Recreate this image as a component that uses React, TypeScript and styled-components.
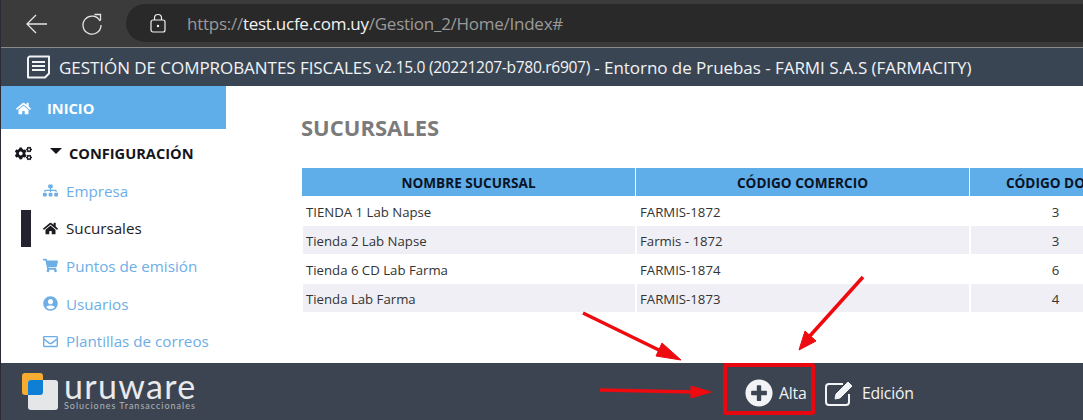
import styled, { createGlobalStyle } from "styled-components";
import {
  FaCogs,
  FaHome,
  FaPlusCircle,
  FaRegEnvelope,
  FaShoppingCart,
  FaSitemap,
  FaUserCircle,
} from "react-icons/fa";

const GlobalStyle = createGlobalStyle`
  html, body {
    margin: 0;
    padding: 0;
    background: #fff;
    overflow: hidden;
  }
  * {
    box-sizing: border-box;
  }
`;

const Page = styled.div`
  position: relative;
  width: 1083px;
  height: 420px;
  display: flex;
  flex-direction: column;
  overflow: hidden;
  font-family: "Open Sans", sans-serif;
  border-left: 1px solid #2c2a35;
`;

const BrowserBar = styled.div`
  height: 48px;
  flex: none;
  display: flex;
  align-items: center;
  background: #3b3b3b;
  border-bottom: 1px solid #8a8a8a;
  padding-left: 24px;
`;

const NavIcon = styled.svg`
  flex: none;
  width: 24px;
  height: 24px;
  fill: none;
  stroke: #e6e6e6;
  stroke-width: 1.3;
  margin-right: 31px;
  &:nth-child(2) {
    margin-right: 22px;
  }
`;

const AddressPill = styled.div`
  flex: 1;
  height: 38px;
  margin-top: -1px;
  background: #292929;
  border-radius: 19px 0 0 19px;
  display: flex;
  align-items: center;
  padding-left: 24px;
  font-size: 17px;
  letter-spacing: -0.26px;
  color: #9a9a9a;
`;

const LockIcon = styled.svg`
  width: 16px;
  height: 20px;
  fill: none;
  stroke: #f0f0f0;
  stroke-width: 1.2;
  margin-right: 21px;
`;

const Host = styled.span`
  color: #f2f2f2;
`;

const AppHeader = styled.header`
  height: 38px;
  flex: none;
  background: #3a4554;
  display: flex;
  align-items: center;
  padding-left: 24px;
  color: #f1f3f5;
  font-size: 17px;
  letter-spacing: -0.05px;
  white-space: nowrap;
`;

const HeaderIcon = styled.svg`
  width: 26px;
  height: 26px;
  margin-right: 8px;
  fill: none;
  stroke: #f1f3f5;
`;

const Version = styled.span`
  font-size: 15.6px;
  letter-spacing: -0.33px;
`;

const Body = styled.div`
  flex: 1;
  min-height: 0;
  display: flex;
`;

const Sidebar = styled.nav`
  width: 225px;
  flex: none;
  overflow: hidden;
`;

const HomeLink = styled.div`
  height: 43px;
  padding: 1px 0 0 15px;
  background: #5faeea;
  display: flex;
  align-items: center;
  gap: 16px;
  color: #fff;
  font-size: 14.6px;
  font-weight: 700;
`;

const SectionTitle = styled.div`
  display: flex;
  align-items: center;
  height: 43px;
  padding: 5px 0 0 14px;
  color: #15151c;
  font-size: 14.6px;
  font-weight: 700;
`;

const Caret = styled.span`
  width: 0;
  height: 0;
  margin: 0 7px 4px 18px;
  border-left: 6px solid transparent;
  border-right: 6px solid transparent;
  border-top: 6px solid #15151c;
`;

const MenuList = styled.ul`
  list-style: none;
  margin: 0;
  padding: 0;
`;

const MenuItem = styled.li<{ $active?: boolean }>`
  position: relative;
  height: 37.6px;
  display: flex;
  align-items: center;
  gap: 8px;
  padding-left: 41px;
  font-size: 15.2px;
  color: ${(p) => (p.$active ? "#1c1c22" : "#6eaee6")};
  &::before {
    content: "";
    display: ${(p) => (p.$active ? "block" : "none")};
    position: absolute;
    left: 20px;
    top: 0;
    width: 10px;
    height: 37px;
    background: #24222f;
  }
`;

const IconSlot = styled.span`
  width: 16px;
  display: flex;
  justify-content: center;
  font-size: 15px;
`;

const Content = styled.main`
  flex: 1;
  min-width: 0;
  padding: 28px 0 0 75px;
`;

const Title = styled.h1`
  margin: 0 0 27px;
  font-size: 22px;
  line-height: 27px;
  font-weight: 700;
  color: #7b7b7b;
`;

const GridTable = styled.div`
  width: 1000px;
  margin-left: 1px;
  font-size: 13.2px;
  color: #333;
`;

const TableRow = styled.div`
  display: grid;
  grid-template-columns: 333px 333px 334px;
  column-gap: 1px;
`;

const HeadCell = styled.div<{ $inset?: number }>`
  height: 28px;
  background: #5faeea;
  display: flex;
  align-items: center;
  justify-content: center;
  padding-right: ${(p) => p.$inset ?? 0}px;
  font-weight: 700;
  font-size: 13.6px;
  white-space: nowrap;
  color: #0b1424;
`;

const BodyCell = styled.div<{ $striped: boolean; $center?: boolean }>`
  height: ${(p) => (p.$striped ? "27.8px" : "30.2px")};
  margin-left: 1px;
  display: flex;
  align-items: center;
  justify-content: ${(p) => (p.$center ? "center" : "flex-start")};
  padding-top: ${(p) => (p.$striped ? "1px" : "2px")};
  padding-left: ${(p) => (p.$center ? "0" : "3px")};
  padding-right: ${(p) => (p.$center ? "164px" : "0")};
  background: ${(p) => (p.$striped ? "#f0eff5" : "#fff")};
`;

const Footer = styled.footer`
  height: 57px;
  flex: none;
  background: #3c4451;
  display: flex;
  align-items: center;
  padding-left: 21px;
`;

const Logo = styled.div`
  width: 721px;
  display: flex;
  align-items: center;
  gap: 6px;
`;

const LogoWords = styled.div`
  display: flex;
  flex-direction: column;
  color: #e8eaec;
`;

const LogoName = styled.span`
  font-family: "Lato", sans-serif;
  font-size: 34px;
  line-height: 28px;
  font-weight: 400;
  letter-spacing: 1.3px;
`;

const LogoTagline = styled.span`
  font-family: "Lato", sans-serif;
  font-size: 9px;
  line-height: 11px;
  letter-spacing: 1px;
  color: #aeb4bb;
`;

const ActionButton = styled.div<{ $width: string }>`
  width: ${(p) => p.$width};
  margin-top: 3px;
  display: flex;
  align-items: center;
  gap: 6px;
  font-size: 15.8px;
  letter-spacing: -0.2px;
  color: #f2f3f4;
`;

const AddSlot = styled.span`
  display: flex;
  margin-left: 2px;
  font-size: 28px;
`;

const EditIcon = styled.svg`
  width: 32px;
  height: 28px;
  fill: none;
  stroke: #f2f3f4;
`;

const Annotations = styled.svg`
  position: absolute;
  left: -1px;
  top: 0;
  width: 1083px;
  height: 420px;
  pointer-events: none;
`;

const sections = [
  { label: "Empresa", icon: <FaSitemap /> },
  { label: "Sucursales", icon: <FaHome />, active: true },
  { label: "Puntos de emisión", icon: <FaShoppingCart /> },
  { label: "Usuarios", icon: <FaUserCircle /> },
  { label: "Plantillas de correos", icon: <FaRegEnvelope /> },
];

const branches = [
  ["TIENDA 1 Lab Napse", "FARMIS-1872", "3"],
  ["Tienda 2 Lab Napse", "Farmis - 1872", "3"],
  ["Tienda 6 CD Lab Farma", "FARMIS-1874", "6"],
  ["Tienda Lab Farma", "FARMIS-1873", "4"],
];

export default function App() {
  return (
    <Page>
      <GlobalStyle />
      <BrowserBar>
        <NavIcon viewBox="0 0 24 24">
          <path d="M22 12H2M11 3l-9 9 9 9" />
        </NavIcon>
        <NavIcon viewBox="0 0 24 24">
          <path d="M20 9A9 9 0 1 0 21 13M14.5 2.5H20.5V8.5" />
        </NavIcon>
        <AddressPill>
          <LockIcon viewBox="0 0 16 20">
            <rect x="1" y="7" width="14" height="12" rx="2" />
            <path d="M4.5 7V5a3.5 3.5 0 0 1 7 0v2" />
            <circle cx="8" cy="13" r="0.6" fill="#f0f0f0" />
          </LockIcon>
          <span>
            https://<Host>test.ucfe.com.uy</Host>/Gestion_2/Home/Index#
          </span>
        </AddressPill>
      </BrowserBar>

      <AppHeader>
        <HeaderIcon viewBox="0 0 26 26">
          <path
            d="M5 2.5h19v17l-4 4H3V4.5a2 2 0 0 1 2-2z"
            strokeWidth="2"
            strokeLinejoin="round"
          />
          <path d="M7 8h13M7 12h13M7 16h13" strokeWidth="1.8" />
        </HeaderIcon>
        GESTIÓN DE COMPROBANTES FISCALES&nbsp;
        <Version>v2.15.0 (20221207-b780.r6907)</Version>
        &nbsp;- Entorno de Pruebas - FARMI S.A.S (FARMACITY)
      </AppHeader>

      <Body>
        <Sidebar>
          <HomeLink>
            <FaHome size={15} />
            INICIO
          </HomeLink>
          <SectionTitle>
            <FaCogs size={17} />
            <Caret />
            CONFIGURACIÓN
          </SectionTitle>
          <MenuList>
            {sections.map((s) => (
              <MenuItem key={s.label} $active={s.active}>
                <IconSlot>{s.icon}</IconSlot>
                {s.label}
              </MenuItem>
            ))}
          </MenuList>
        </Sidebar>
        <Content>
          <Title>SUCURSALES</Title>
          <GridTable>
            <TableRow>
              <HeadCell>NOMBRE SUCURSAL</HeadCell>
              <HeadCell>CÓDIGO COMERCIO</HeadCell>
              <HeadCell $inset={114}>CÓDIGO DOCUMENTO</HeadCell>
            </TableRow>
            {branches.map((row, i) => (
              <TableRow key={row[0]}>
                <BodyCell $striped={i % 2 === 1}>{row[0]}</BodyCell>
                <BodyCell $striped={i % 2 === 1}>{row[1]}</BodyCell>
                <BodyCell $striped={i % 2 === 1} $center>
                  {row[2]}
                </BodyCell>
              </TableRow>
            ))}
          </GridTable>
        </Content>
      </Body>

      <Footer>
        <Logo>
          <svg width="36" height="38" viewBox="0 0 36 38">
            <rect x="0" y="0" width="21" height="22" rx="3" fill="#f5ac30" />
            <rect x="6" y="7" width="30" height="30" rx="3" fill="#e4e6e8" />
            <path d="M6 10a3 3 0 0 1 3-3h12v12a3 3 0 0 1-3 3H6z" fill="#0f7fd6" />
          </svg>
          <LogoWords>
            <LogoName>uruware</LogoName>
            <LogoTagline>Soluciones Transaccionales</LogoTagline>
          </LogoWords>
        </Logo>
        <ActionButton $width="81px">
          <AddSlot>
            <FaPlusCircle />
          </AddSlot>
          Alta
        </ActionButton>
        <ActionButton $width="110px">
          <EditIcon viewBox="0 0 32 28">
            <path
              d="M25 15v8a3 3 0 0 1-3 3H5a3 3 0 0 1-3-3V8a3 3 0 0 1 3-3h14"
              strokeWidth="2"
            />
            <path d="M11 20l1-5L24 3l4 4-12 12z" fill="#f2f3f4" strokeWidth="1" />
          </EditIcon>
          Edición
        </ActionButton>
      </Footer>

      <Annotations viewBox="0 0 1083 420">
        <rect x="725" y="365" width="88" height="48" rx="1" fill="none" stroke="#e8060f" strokeWidth="4" />
        <g stroke="#ee0a0f" strokeWidth="3.5" fill="#ee0a0f">
          <path d="M583 313L665 353" />
          <path d="M681 360L662 343L656 356z" strokeWidth="1" />
          <path d="M863 277L808 338" />
          <path d="M799 350L805 331L816 341z" strokeWidth="1" />
          <path d="M600 390L695 392" />
          <path d="M711 392L691 386L691 398z" strokeWidth="1" />
        </g>
      </Annotations>
    </Page>
  );
}
